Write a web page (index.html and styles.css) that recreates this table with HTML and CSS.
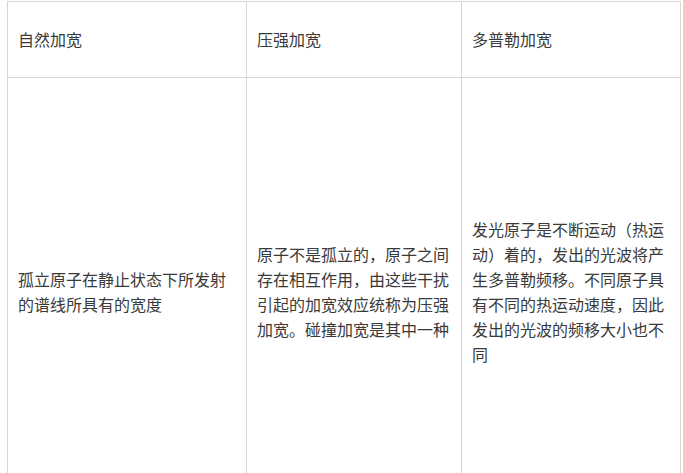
FILE: index.html
```html
<!DOCTYPE html>
<html lang="zh">
<head>
    <meta charset="UTF-8">
    <title>谱线加宽</title>
    <link rel="stylesheet" href="styles.css">
</head>
<body>
    <table class="broadening">
        <colgroup>
            <col class="col-natural">
            <col class="col-pressure">
            <col class="col-doppler">
        </colgroup>
        <tr class="head-row">
            <td>自然加宽</td>
            <td>压强加宽</td>
            <td>多普勒加宽</td>
        </tr>
        <tr class="body-row">
            <td>孤立原子在静止状态下所发射的谱线所具有的宽度</td>
            <td>原子不是孤立的，原子之间存在相互作用，由这些干扰引起的加宽效应统称为压强加宽。碰撞加宽是其中一种</td>
            <td>发光原子是不断运动（热运动）着的，发出的光波将产生多普勒频移。不同原子具有不同的热运动速度，因此发出的光波的频移大小也不同</td>
        </tr>
    </table>
</body>
</html>
```

FILE: styles.css
```css
body {
    margin: 1px 0 0 7px;
    background: #fff;
    font-family: "Noto Sans CJK SC", "Noto Sans", sans-serif;
    font-size: 16px;
    color: #3a3a3a;
}
.broadening {
    border-collapse: collapse;
    table-layout: fixed;
    width: 673px;
}
.col-natural {
    width: 239px;
}
.col-pressure {
    width: 215px;
}
.col-doppler {
    width: 219px;
}
.broadening td {
    border: 1px solid #d6d6d6;
    padding: 0 10px 0 10px;
    line-height: 25px;
    vertical-align: middle;
    word-break: break-all;
}
.head-row td {
    height: 75px;
}
.body-row td {
    height: 427px;
}
```
